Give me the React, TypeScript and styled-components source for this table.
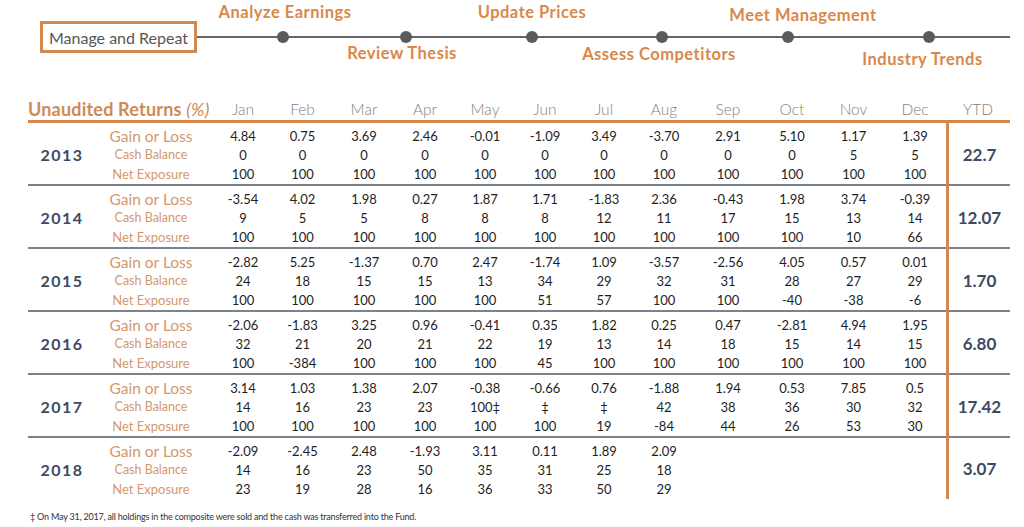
import styled, { createGlobalStyle } from 'styled-components';

const GlobalStyle = createGlobalStyle`
  body {
    margin: 0;
    background: #ffffff;
    font-family: Lato, 'Open Sans', sans-serif;
  }
`;

const ORANGE = '#d4884e';
const NAVY = '#3d4a63';
const COLS = '80px 106px 58px 61px 62px 60px 60px 60px 58px 62px 66px 62px 61px 62px 64px';

const MONTHS = ['Jan', 'Feb', 'Mar', 'Apr', 'May', 'Jun', 'Jul', 'Aug', 'Sep', 'Oct', 'Nov', 'Dec'];
const METRICS = ['Gain or Loss', 'Cash Balance', 'Net Exposure'];

type YearData = { year: string; rows: string[][]; ytd: string };

const DATA: YearData[] = [
  {
    year: '2013',
    rows: [
      ['4.84', '0.75', '3.69', '2.46', '-0.01', '-1.09', '3.49', '-3.70', '2.91', '5.10', '1.17', '1.39'],
      ['0', '0', '0', '0', '0', '0', '0', '0', '0', '0', '5', '5'],
      ['100', '100', '100', '100', '100', '100', '100', '100', '100', '100', '100', '100'],
    ],
    ytd: '22.7',
  },
  {
    year: '2014',
    rows: [
      ['-3.54', '4.02', '1.98', '0.27', '1.87', '1.71', '-1.83', '2.36', '-0.43', '1.98', '3.74', '-0.39'],
      ['9', '5', '5', '8', '8', '8', '12', '11', '17', '15', '13', '14'],
      ['100', '100', '100', '100', '100', '100', '100', '100', '100', '100', '10', '66'],
    ],
    ytd: '12.07',
  },
  {
    year: '2015',
    rows: [
      ['-2.82', '5.25', '-1.37', '0.70', '2.47', '-1.74', '1.09', '-3.57', '-2.56', '4.05', '0.57', '0.01'],
      ['24', '18', '15', '15', '13', '34', '29', '32', '31', '28', '27', '29'],
      ['100', '100', '100', '100', '100', '51', '57', '100', '100', '-40', '-38', '-6'],
    ],
    ytd: '1.70',
  },
  {
    year: '2016',
    rows: [
      ['-2.06', '-1.83', '3.25', '0.96', '-0.41', '0.35', '1.82', '0.25', '0.47', '-2.81', '4.94', '1.95'],
      ['32', '21', '20', '21', '22', '19', '13', '14', '18', '15', '14', '15'],
      ['100', '-384', '100', '100', '100', '45', '100', '100', '100', '100', '100', '100'],
    ],
    ytd: '6.80',
  },
  {
    year: '2017',
    rows: [
      ['3.14', '1.03', '1.38', '2.07', '-0.38', '-0.66', '0.76', '-1.88', '1.94', '0.53', '7.85', '0.5'],
      ['14', '16', '23', '23', '100‡', '‡', '‡', '42', '38', '36', '30', '32'],
      ['100', '100', '100', '100', '100', '100', '19', '-84', '44', '26', '53', '30'],
    ],
    ytd: '17.42',
  },
  {
    year: '2018',
    rows: [
      ['-2.09', '-2.45', '2.48', '-1.93', '3.11', '0.11', '1.89', '2.09', '', '', '', ''],
      ['14', '16', '23', '50', '35', '31', '25', '18', '', '', '', ''],
      ['23', '19', '28', '16', '36', '33', '50', '29', '', '', '', ''],
    ],
    ytd: '3.07',
  },
];

type Step = { top?: string; bottom?: string; width: number; shift?: number; gap?: number };

const STEPS: Step[] = [
  { top: 'Analyze Earnings', width: 120, gap: 10, shift: 2 },
  { bottom: 'Review Thesis', width: 126, gap: 1, shift: -4 },
  { top: 'Update Prices', width: 126, gap: 10 },
  { bottom: 'Assess Competitors', width: 134, gap: 2, shift: -3 },
  { top: 'Meet Management', width: 118, gap: 7, shift: 15 },
  { bottom: 'Industry Trends', width: 163, gap: 7, shift: -6 },
];

const App = () => {
  return (
    <>
      <GlobalStyle />
      <Page>
        <Timeline>
          <StartBox>Manage and Repeat</StartBox>
          <Track>
            {STEPS.map((s, i) => (
              <StepCol key={i} w={s.width}>
                <TopSlot>
                  {s.top && (
                    <StepLabel shift={s.shift ?? 0} style={{ marginBottom: s.gap }}>
                      {s.top}
                    </StepLabel>
                  )}
                </TopSlot>
                <Dot />
                <BottomSlot>
                  {s.bottom && (
                    <StepLabel shift={s.shift ?? 0} style={{ marginTop: s.gap }}>
                      {s.bottom}
                    </StepLabel>
                  )}
                </BottomSlot>
              </StepCol>
            ))}
          </Track>
        </Timeline>

        <Table>
          <HeaderRow>
            <TableTitle>
              Unaudited Returns <em>(%)</em>
            </TableTitle>
            {MONTHS.map((m) => (
              <MonthHead key={m}>{m}</MonthHead>
            ))}
            <MonthHead>YTD</MonthHead>
          </HeaderRow>

          {DATA.map((d, gi) => (
            <YearGroup key={d.year} last={gi === DATA.length - 1}>
              <YearCell>{d.year}</YearCell>
              {d.rows.map((row, ri) => (
                <RowFragment key={ri} row={ri} label={METRICS[ri]} values={row} />
              ))}
              <YtdCell last={gi === DATA.length - 1}>{d.ytd}</YtdCell>
            </YearGroup>
          ))}
        </Table>

        <Footnote>
          ‡ On May 31, 2017, all holdings in the composite were sold and the cash was transferred into the Fund.
        </Footnote>
      </Page>
    </>
  );
};

const RowFragment = ({ row, label, values }: { row: number; label: string; values: string[] }) => (
  <>
    <MetricLabel row={row} kind={row}>
      {label}
    </MetricLabel>
    {values.map((v, i) => (
      <ValueCell key={i} row={row} col={i + 3}>
        {v}
      </ValueCell>
    ))}
  </>
);

export default App;

const Page = styled.div`
  width: 1024px;
  height: 527px;
  overflow: hidden;
`;

const Timeline = styled.div`
  display: flex;
  align-items: center;
  height: 74px;
  padding-left: 40px;
`;

const StartBox = styled.div`
  box-sizing: border-box;
  width: 157px;
  height: 32px;
  border: 3px solid ${ORANGE};
  display: flex;
  align-items: center;
  justify-content: center;
  color: #565656;
  font-size: 16px;
`;

const Track = styled.div`
  display: flex;
  width: 813px;
  height: 74px;
  padding-left: 26px;
  box-sizing: border-box;
  background: linear-gradient(#666, #666) center / 100% 2px no-repeat;
`;

const StepCol = styled.div<{ w: number }>`
  width: ${({ w }) => `${w}px`};
  flex-shrink: 0;
  display: grid;
  grid-template-columns: minmax(0, 1fr);
  grid-template-rows: 1fr 12px 1fr;
  justify-items: center;
`;

const TopSlot = styled.div`
  display: flex;
  align-items: flex-end;
  justify-content: center;
  width: 100%;
`;

const BottomSlot = styled.div`
  display: flex;
  align-items: flex-start;
  justify-content: center;
  width: 100%;
`;

const Dot = styled.div`
  width: 12px;
  height: 12px;
  border-radius: 50%;
  background: #5b5b5b;
`;

const StepLabel = styled.div<{ shift: number }>`
  flex-shrink: 0;
  white-space: nowrap;
  font-weight: 700;
  font-size: 16.5px;
  letter-spacing: 0.5px;
  line-height: 18px;
  color: #d9884a;
  transform: translateX(${({ shift }) => `${shift}px`});
`;

const Table = styled.div`
  margin: 24px 0 0 28px;
  width: 982px;
`;

const HeaderRow = styled.div`
  display: grid;
  grid-template-columns: ${COLS};
  height: 22px;
  align-items: center;
  border-bottom: 3px solid ${ORANGE};
`;

const TableTitle = styled.div`
  grid-column: 1 / 3;
  font-weight: 700;
  font-size: 18px;
  letter-spacing: 0.2px;
  color: #d08a56;
  white-space: nowrap;

  em {
    font-weight: 400;
    font-style: italic;
  }
`;

const MonthHead = styled.div`
  text-align: center;
  font-size: 15.5px;
  font-weight: 300;
  color: #7f7f7f;
`;

const YearGroup = styled.div<{ last: boolean }>`
  display: grid;
  grid-template-columns: ${COLS};
  grid-template-rows: repeat(3, 19px);
  padding: 3px 0 1px;
  border-bottom: ${({ last }) => (last ? 'none' : '2px solid #7b828a')};
`;

const YearCell = styled.div`
  grid-column: 1;
  grid-row: 1 / 4;
  display: flex;
  align-items: center;
  justify-content: center;
  padding-right: 12px;
  font-weight: 700;
  font-size: 16px;
  letter-spacing: 1.5px;
  color: ${NAVY};
`;

const MetricLabel = styled.div<{ row: number; kind: number }>`
  grid-column: 2;
  grid-row: ${({ row }) => row + 1};
  padding-right: 20px;
  display: flex;
  align-items: center;
  justify-content: center;
  white-space: nowrap;
  color: #d4986c;
  font-size: ${({ kind }) => (kind === 0 ? '15.5px' : kind === 1 ? '12.5px' : '13px')};
`;

const ValueCell = styled.div<{ row: number; col: number }>`
  grid-column: ${({ col }) => col};
  grid-row: ${({ row }) => row + 1};
  display: flex;
  align-items: center;
  justify-content: center;
  font-size: 13px;
  color: #1e1e1e;
`;

const YtdCell = styled.div<{ last: boolean }>`
  grid-column: 15;
  grid-row: 1 / 4;
  margin: -3px 0 ${({ last }) => (last ? '-1px' : '-3px')};
  border-left: 3px solid ${ORANGE};
  display: flex;
  align-items: center;
  justify-content: center;
  font-weight: 700;
  font-size: 17px;
  color: ${NAVY};
`;

const Footnote = styled.div`
  margin: 12px 0 0 30px;
  font-size: 9px;
  line-height: 12px;
  letter-spacing: -0.2px;
  color: #333;
`;
